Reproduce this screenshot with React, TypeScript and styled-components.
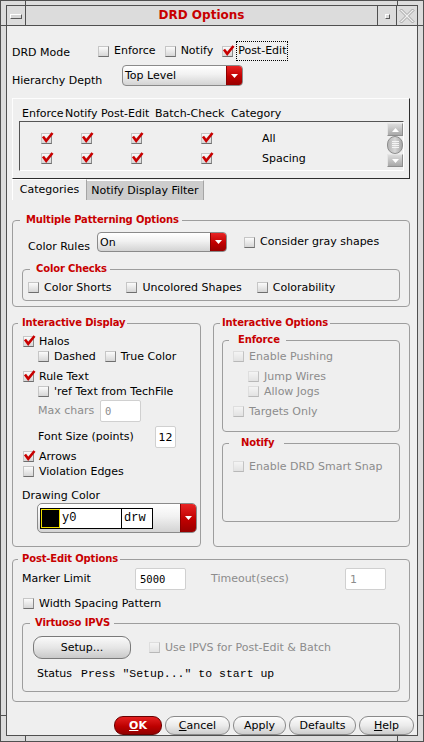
import React from 'react';
import styled, { createGlobalStyle } from 'styled-components';

const RED = '#c80000';
const LINE = '#505050';
const GROUP = '#9d9d9d';
const DIM = '#8c8c8c';

const GlobalStyle = createGlobalStyle`
  * { box-sizing: border-box; }
  html, body { margin: 0; padding: 0; background: #dcdcdc; }
  body {
    font-family: "DejaVu Sans", "Noto Sans", sans-serif;
    font-size: 11px;
    color: #000;
  }
`;

const Frame = styled.div`
  position: relative;
  width: 424px;
  height: 742px;
  padding: 4px 5px 5px 5px;
  border: 1px solid ${LINE};
  background: #dcdcdc;
`;

const Handle = styled.span<{ $l?: number; $t?: number; $r?: number; $b?: number; $v?: boolean }>`
  position: absolute;
  background: ${LINE};
  ${p => (p.$v ? 'width: 1px; height: 5px;' : 'width: 5px; height: 1px;')}
  ${p => (p.$l !== undefined ? `left: ${p.$l}px;` : '')}
  ${p => (p.$t !== undefined ? `top: ${p.$t}px;` : '')}
  ${p => (p.$r !== undefined ? `right: ${p.$r}px;` : '')}
  ${p => (p.$b !== undefined ? `bottom: ${p.$b}px;` : '')}
`;

const Window = styled.div`
  height: 100%;
  border: 1px solid ${LINE};
  display: flex;
  flex-direction: column;
`;

const TitleBar = styled.div`
  display: flex;
  height: 20px;
  flex: none;
  border-bottom: 1px solid ${LINE};
  background: #dcdcdc;
`;

const TitleButton = styled.div<{ $w: number; $side: 'left' | 'right' }>`
  width: ${p => p.$w}px;
  flex: none;
  ${p => (p.$side === 'left' ? 'border-right' : 'border-left')}: 1px solid ${LINE};
  display: flex;
  align-items: center;
  justify-content: center;
`;

const MenuGlyph = styled.span`
  width: 12px;
  height: 5px;
  margin-top: 2px;
  border: 1px solid;
  border-color: #fff #5a5a5a #5a5a5a #fff;
  background: #d6d6d6;
`;

const MinGlyph = styled.span`
  width: 5px;
  height: 5px;
  margin-top: 2px;
  border: 1px solid;
  border-color: #fff #5a5a5a #5a5a5a #fff;
`;

const Title = styled.div`
  flex: 1;
  text-align: center;
  color: ${RED};
  font-weight: bold;
  font-size: 12px;
  line-height: 19px;
`;

const Content = styled.div`
  flex: 1;
  background: #efefef;
  padding: 0 7px 0 5px;
  display: flex;
  flex-direction: column;
`;

const Row = styled.div<{ $h?: number; $mt?: number; $indent?: number }>`
  display: flex;
  align-items: center;
  flex: none;
  height: ${p => p.$h ?? 15}px;
  margin-top: ${p => p.$mt ?? 0}px;
  padding-left: ${p => p.$indent ?? 0}px;
`;

const Label = styled.span<{ $w?: number; $dim?: boolean; $pt?: number; $ml?: number }>`
  flex: none;
  ${p => (p.$w ? `width: ${p.$w}px;` : '')}
  margin-left: ${p => p.$ml ?? 0}px;
  padding-top: ${p => p.$pt ?? 0}px;
  line-height: 14px;
  white-space: nowrap;
  color: ${p => (p.$dim ? DIM : '#000')};
`;

const Checks = styled.div<{ $gap: number }>`
  display: flex;
  align-items: center;
  gap: ${p => p.$gap}px;
`;

const CheckLabel = styled.label<{ $dim?: boolean; $ml?: number }>`
  display: inline-flex;
  align-items: center;
  gap: 5px;
  margin-left: ${p => p.$ml ?? 0}px;
  line-height: 14px;
  white-space: nowrap;
  color: ${p => (p.$dim ? DIM : '#000')};
`;

const Box = styled.span<{ $dim?: boolean }>`
  position: relative;
  flex: none;
  width: 11px;
  height: 11px;
  border: 1px solid;
  border-color: ${p => (p.$dim ? '#dedede #c2c2c2 #b8b8b8 #dedede' : '#c6c6c6 #8a8a8a #6e6e6e #c6c6c6')};
  background: ${p => (p.$dim ? 'linear-gradient(#f4f4f4, #e2e2e2)' : 'linear-gradient(#fbfbfb, #d6d6d6)')};
`;

const Mark = styled.svg`
  position: absolute;
  left: -1px;
  top: -2px;
`;

const Focus = styled.span`
  border: 1px dotted #000;
  padding: 2px 1px 2px 1px;
  margin-left: -2px;
`;

function Check({ label, checked, dim, focus, ml }: { label?: string; checked?: boolean; dim?: boolean; focus?: boolean; ml?: number }) {
  return (
    <CheckLabel $dim={dim} $ml={ml}>
      <Box $dim={dim}>
        {checked && (
          <Mark width="13" height="12" viewBox="0 0 13 12">
            <path d="M2 4.5 L5.2 8.8 L11.5 1" fill="none" stroke={RED} strokeWidth="2.6" />
          </Mark>
        )}
      </Box>
      {label && (focus ? <Focus>{label}</Focus> : <span>{label}</span>)}
    </CheckLabel>
  );
}

const SelectBox = styled.div<{ $w: number; $h: number }>`
  width: ${p => p.$w}px;
  height: ${p => p.$h}px;
  flex: none;
  display: flex;
  border: 1px solid #8a8a8a;
  border-radius: 4px;
  overflow: hidden;
  background: linear-gradient(#ffffff, #f1f1f1 45%, #d3d3d3);
`;

const SelectValue = styled.span`
  flex: 1;
  display: flex;
  align-items: center;
  padding-left: 2px;
`;

const SelectArrow = styled.span`
  width: 16px;
  flex: none;
  display: flex;
  align-items: center;
  justify-content: center;
  border-left: 1px solid #8c0000;
  background: linear-gradient(#e82424, #c00000 55%, #980000);
`;

const Arrow = () => (
  <svg width="7" height="4" viewBox="0 0 7 4">
    <polygon points="0,0 7,0 3.5,4" fill="#fff" />
  </svg>
);

function Select({ value, w, h }: { value: string; w: number; h: number }) {
  return (
    <SelectBox $w={w} $h={h}>
      <SelectValue>{value}</SelectValue>
      <SelectArrow>
        <Arrow />
      </SelectArrow>
    </SelectBox>
  );
}

const TableFrame = styled.div`
  flex: none;
  margin-top: 12px;
  height: 81px;
  border: 1px solid;
  border-color: #fdfdfd #2e2e2e #2e2e2e #fdfdfd;
  padding: 8px 5px 0 6px;
`;

const HeaderGrid = styled.div`
  display: grid;
  grid-template-columns: 43px 36px 54px 76px 1fr;
  padding-left: 3px;
  height: 14px;
  line-height: 14px;
  white-space: nowrap;
`;

const ListBox = styled.div`
  height: 50px;
  display: flex;
  border: 1px solid;
  border-color: #555 #fff #fff #555;
`;

const ListRows = styled.div`
  flex: 1;
  padding-top: 6px;
`;

const ListRow = styled.div`
  display: grid;
  grid-template-columns: 40px 50px 70px 61px 1fr;
  align-items: center;
  padding-left: 21px;
  height: 20px;
`;

const ScrollBar = styled.div`
  width: 16px;
  margin-top: 1px;
  display: flex;
  flex-direction: column;
`;

const ScrollBtn = styled.div`
  height: 13px;
  display: flex;
  align-items: center;
  justify-content: center;
  border: 1px solid;
  border-color: #e6e6e6 #8e8e8e #8e8e8e #e6e6e6;
  background: linear-gradient(#dcdcdc, #a8a8a8);
`;

const Thumb = styled.div`
  height: 18px;
  border-radius: 8px;
  border: 1px solid #8e8e8e;
  background: linear-gradient(90deg, #b4b4b4, #d8d8d8 50%, #a6a6a6);
  display: flex;
  align-items: center;
  justify-content: center;
`;

const Grip = styled.span`
  width: 7px;
  height: 8px;
  background: repeating-linear-gradient(#f4f4f4 0 1px, transparent 1px 2px);
`;

const TabBar = styled.div`
  display: flex;
  align-items: flex-end;
  flex: none;
  height: 21px;
`;

const Tab = styled.div<{ $active?: boolean; $w: number }>`
  width: ${p => p.$w}px;
  height: ${p => (p.$active ? 21 : 20)}px;
  border-top: 1px solid #fff;
  border-left: ${p => (p.$active ? '1px solid #fff' : 'none')};
  border-right: 1px solid #a5a5a5;
  background: ${p => (p.$active ? '#efefef' : '#cdcdcd')};
  text-align: center;
  line-height: 19px;
  white-space: nowrap;
`;

const Group = styled.fieldset<{ $mt?: number; $ml?: number; $mr?: number; $pb?: number; $w?: number; $grow?: boolean }>`
  margin: ${p => p.$mt ?? 0}px ${p => p.$mr ?? 0}px 0 ${p => p.$ml ?? 0}px;
  padding: 0 0 ${p => p.$pb ?? 0}px 0;
  border: 1px solid ${GROUP};
  border-radius: 4px;
  min-width: 0;
  min-inline-size: 0;
  ${p => (p.$w ? `width: ${p.$w}px;` : '')}
  flex: ${p => (p.$grow ? 1 : 'none')};
  display: flex;
  flex-direction: column;
`;

const Legend = styled.legend<{ $ml: number; $pl: number; $pr: number }>`
  margin-left: ${p => p.$ml}px;
  padding: 0 ${p => p.$pr}px 0 ${p => p.$pl}px;
  color: ${RED};
  font-weight: bold;
  font-size: 10px;
  line-height: 12px;
  letter-spacing: -0.15px;
  white-space: nowrap;
`;

const Columns = styled.div`
  display: flex;
  gap: 12px;
  margin-top: 10px;
  flex: none;
`;

const Field = styled.div<{ $w: number; $dim?: boolean; $center?: boolean; $mono?: boolean }>`
  width: ${p => p.$w}px;
  height: 22px;
  flex: none;
  display: flex;
  align-items: center;
  justify-content: ${p => (p.$center ? 'center' : 'flex-start')};
  padding-left: ${p => (p.$center ? 0 : 4)}px;
  background: #fff;
  border: 1px solid #d0d0d0;
  border-radius: 2px;
  color: ${p => (p.$dim ? DIM : '#000')};
  font-family: ${p => (p.$mono ? '"DejaVu Sans Mono", monospace' : 'inherit')};
  font-size: ${p => (p.$mono ? 10.5 : 11)}px;
`;

const ColorSelect = styled.div`
  width: 160px;
  height: 30px;
  display: flex;
  align-items: center;
  border: 1px solid #8a8a8a;
  border-radius: 5px;
  overflow: hidden;
  padding-left: 2px;
  background: linear-gradient(#ffffff, #f1f1f1 45%, #d3d3d3);
`;

const LayerCell = styled.div`
  display: flex;
  height: 21px;
  border: 1px solid #000;
  background: #fff;
  font-family: "Liberation Mono", monospace;
  font-size: 12px;
`;

const Swatch = styled.span`
  width: 19px;
  background: #000;
  border: 1px solid #f0e000;
`;

const LayerText = styled.span<{ $w: number; $divider?: boolean }>`
  width: ${p => p.$w}px;
  display: flex;
  align-items: center;
  padding-left: 2px;
  ${p => (p.$divider ? 'border-left: 1px solid #000;' : '')}
`;

const ColorArrow = styled(SelectArrow)`
  margin-left: auto;
  align-self: stretch;
`;

const SetupButton = styled.button`
  width: 98px;
  height: 23px;
  flex: none;
  padding: 0;
  font: inherit;
  color: #000;
  border: 1px solid #7a7a7a;
  border-radius: 9px;
  background: linear-gradient(#fafafa, #e6e6e6 50%, #c9c9c9);
`;

const Mono = styled.span`
  font-family: "Liberation Mono", monospace;
  font-size: 11.5px;
  white-space: pre;
`;

const ButtonBar = styled.div`
  margin-top: auto;
  margin-right: -4px;
  display: flex;
  justify-content: flex-end;
  gap: 3px;
  flex: none;
`;

const PillButton = styled.button<{ $w: number; $primary?: boolean }>`
  width: ${p => p.$w}px;
  height: 19px;
  padding: 0;
  font: inherit;
  border-radius: 9px;
  border: 1px solid ${p => (p.$primary ? '#6a0000' : '#8a8a8a')};
  background: ${p =>
    p.$primary
      ? 'linear-gradient(#e42020, #bd0000 55%, #920000)'
      : 'linear-gradient(#fcfcfc, #ebebeb 50%, #cdcdcd)'};
  color: ${p => (p.$primary ? '#fff' : '#000')};
  font-weight: ${p => (p.$primary ? 'bold' : 'normal')};
`;

const U = styled.span`
  text-decoration: underline;
`;

export default function App() {
  return (
    <>
      <GlobalStyle />
      <Frame>
        <Handle $v $l={24} $t={0} />
        <Handle $v $r={25} $t={0} />
        <Handle $v $l={24} $b={0} />
        <Handle $v $r={25} $b={0} />
        <Handle $l={0} $t={24} />
        <Handle $r={0} $t={24} />
        <Handle $l={0} $b={25} />
        <Handle $r={0} $b={25} />
        <Window>
          <TitleBar>
            <TitleButton $w={19} $side="left">
              <MenuGlyph />
            </TitleButton>
            <Title>DRD Options</Title>
            <TitleButton $w={19} $side="right">
              <MinGlyph />
            </TitleButton>
            <TitleButton $w={21} $side="right">
              <svg width="16" height="16" viewBox="0 0 16 16">
                <path
                  d="M1 2.5 L2.5 1 L8 6.5 L13.5 1 L15 2.5 L9.5 8 L15 13.5 L13.5 15 L8 9.5 L2.5 15 L1 13.5 L6.5 8 Z"
                  fill="#efefef"
                  stroke="#a2a2a2"
                />
              </svg>
            </TitleButton>
          </TitleBar>

          <Content>
            <Row $h={20} $mt={15}>
              <Label $w={86} $pt={3}>DRD Mode</Label>
              <Checks $gap={9}>
                <Check label="Enforce" />
                <Check label="Notify" />
                <Check label="Post-Edit" checked focus />
              </Checks>
            </Row>
            <Row $h={21} $mt={4}>
              <Label $w={110} $pt={10}>Hierarchy Depth</Label>
              <Select value="Top Level" w={121} h={21} />
            </Row>

            <TableFrame>
              <HeaderGrid>
                <span>Enforce</span>
                <span>Notify</span>
                <span>Post-Edit</span>
                <span>Batch-Check</span>
                <span>Category</span>
              </HeaderGrid>
              <ListBox>
                <ListRows>
                  {['All', 'Spacing'].map(cat => (
                    <ListRow key={cat}>
                      <Check checked />
                      <Check checked />
                      <Check checked />
                      <Check checked />
                      <span>{cat}</span>
                    </ListRow>
                  ))}
                </ListRows>
                <ScrollBar>
                  <ScrollBtn>
                    <svg width="7" height="4" viewBox="0 0 7 4">
                      <polygon points="0,4 7,4 3.5,0" fill="#fff" />
                    </svg>
                  </ScrollBtn>
                  <Thumb>
                    <Grip />
                  </Thumb>
                  <ScrollBtn>
                    <Arrow />
                  </ScrollBtn>
                </ScrollBar>
              </ListBox>
            </TableFrame>

            <TabBar>
              <Tab $active $w={75}>Categories</Tab>
              <Tab $w={117}>Notify Display Filter</Tab>
            </TabBar>

            <Group $mt={14} $pb={5}>
              <Legend $ml={7} $pl={6} $pr={3}>Multiple Patterning Options</Legend>
              <Row $h={20} $mt={6} $indent={15}>
                <Label $w={69} $pt={10}>Color Rules</Label>
                <Select value="On" w={130} h={20} />
                <Check label="Consider gray shapes" ml={17} />
              </Row>
              <Group $mt={11} $ml={9} $mr={9} $pb={5}>
                <Legend $ml={7} $pl={6} $pr={3}>Color Checks</Legend>
                <Row $mt={5} $indent={5}>
                  <Checks $gap={15}>
                    <Check label="Color Shorts" />
                    <Check label="Uncolored Shapes" />
                    <Check label="Colorability" />
                  </Checks>
                </Row>
              </Group>
            </Group>

            <Columns>
              <Group $w={189} $pb={13}>
                <Legend $ml={5} $pl={4} $pr={2}>Interactive Display</Legend>
                <Row $mt={5} $indent={10}>
                  <Check label="Halos" checked />
                </Row>
                <Row $indent={25}>
                  <Checks $gap={9}>
                    <Check label="Dashed" />
                    <Check label="True Color" />
                  </Checks>
                </Row>
                <Row $mt={5} $indent={10}>
                  <Check label="Rule Text" checked />
                </Row>
                <Row $indent={25}>
                  <Check label="'ref Text from TechFile" />
                </Row>
                <Row $h={22} $mt={1} $indent={25}>
                  <Label $w={62} $dim>Max chars</Label>
                  <Field $w={41} $dim $mono>0</Field>
                </Row>
                <Row $h={22} $mt={4} $indent={25}>
                  <Label $w={117}>Font Size (points)</Label>
                  <Field $w={21} $center>12</Field>
                </Row>
                <Row $mt={1} $indent={10}>
                  <Check label="Arrows" checked />
                </Row>
                <Row $indent={10}>
                  <Check label="Violation Edges" />
                </Row>
                <Row $h={14} $mt={10} $indent={9}>
                  <Label>Drawing Color</Label>
                </Row>
                <Row $h={30} $indent={24}>
                  <ColorSelect>
                    <LayerCell>
                      <Swatch />
                      <LayerText $w={61}>y0</LayerText>
                      <LayerText $w={31} $divider>drw</LayerText>
                    </LayerCell>
                    <ColorArrow>
                      <Arrow />
                    </ColorArrow>
                  </ColorSelect>
                </Row>
              </Group>

              <Group $grow>
                <Legend $ml={6} $pl={2} $pr={2}>Interactive Options</Legend>
                <Group $mt={5} $ml={8} $mr={9} $pb={12}>
                  <Legend $ml={6} $pl={9} $pr={6}>Enforce</Legend>
                  <Row $mt={3} $indent={10}>
                    <Check label="Enable Pushing" dim />
                  </Row>
                  <Row $mt={5} $indent={25}>
                    <Check label="Jump Wires" dim />
                  </Row>
                  <Row $indent={25}>
                    <Check label="Allow Jogs" dim />
                  </Row>
                  <Row $mt={5} $indent={10}>
                    <Check label="Targets Only" dim />
                  </Row>
                </Group>
                <Group $mt={5} $ml={8} $mr={9} $pb={47}>
                  <Legend $ml={6} $pl={12} $pr={10}>Notify</Legend>
                  <Row $mt={10} $indent={10}>
                    <Check label="Enable DRD Smart Snap" dim />
                  </Row>
                </Group>
              </Group>
            </Columns>

            <Group $mt={6} $pb={9}>
              <Legend $ml={5} $pl={4} $pr={2}>Post-Edit Options</Legend>
              <Row $h={22} $mt={3} $indent={9}>
                <Label $w={113}>Marker Limit</Label>
                <Field $w={51} $mono>5000</Field>
                <Label $w={134} $ml={25} $dim>Timeout(secs)</Label>
                <Field $w={41} $dim>1</Field>
              </Row>
              <Row $mt={6} $indent={10}>
                <Check label="Width Spacing Pattern" />
              </Row>
              <Group $mt={6} $ml={9} $mr={9} $pb={10}>
                <Legend $ml={7} $pl={5} $pr={4}>Virtuoso IPVS</Legend>
                <Row $h={23} $mt={7} $indent={10}>
                  <SetupButton>Setup...</SetupButton>
                  <Check label="Use IPVS for Post-Edit & Batch" dim ml={18} />
                </Row>
                <Row $mt={7} $indent={14}>
                  <Label $w={44}>Status</Label>
                  <Mono>Press "Setup..." to start up</Mono>
                </Row>
              </Group>
            </Group>

            <ButtonBar>
              <PillButton $w={48} $primary>
                <U>O</U>K
              </PillButton>
              <PillButton $w={65}>
                <U>C</U>ancel
              </PillButton>
              <PillButton $w={53}>Apply</PillButton>
              <PillButton $w={67}>Defaults</PillButton>
              <PillButton $w={55}>
                <U>H</U>elp
              </PillButton>
            </ButtonBar>
          </Content>
        </Window>
      </Frame>
    </>
  );
}
